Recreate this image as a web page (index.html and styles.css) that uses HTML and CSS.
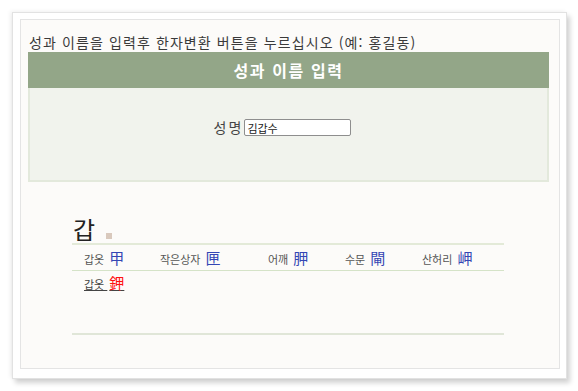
FILE: index.html
```html
<!DOCTYPE html>
<html lang="ko">
<head>
    <meta charset="UTF-8">
    <meta name="viewport" content="width=device-width, initial-scale=1.0">
    <title>한자변환</title>
    <link rel="stylesheet" href="styles.css">
</head>
<body>
    <div class="frame">
        <div class="sheet">
            <p class="guide">성과 이름을 입력후 한자변환 버튼을 누르십시오 (예: 홍길동)</p>

            <div class="name-box">
                <div class="name-head">성과 이름 입력</div>
                <div class="name-body">
                    <label class="name-label" for="id-name">성명</label>
                    <input class="name-input" id="id-name" type="text" value="김갑수">
                </div>
            </div>

            <!-- 변환 결과 -->
            <div class="result">
                <div class="result-title">갑 <span class="dot"></span></div>
                <div class="result-row">
                    <span class="item">갑옷 <b class="hanja">甲</b></span>
                    <span class="item">작은상자 <b class="hanja">匣</b></span>
                    <span class="item">어깨 <b class="hanja">胛</b></span>
                    <span class="item">수문 <b class="hanja">閘</b></span>
                    <span class="item">산허리 <b class="hanja">岬</b></span>
                </div>
                <div class="result-row last">
                    <a class="item picked" href="#">갑옷 <b class="hanja">鉀</b></a>
                </div>
            </div>
        </div>
    </div>
</body>
</html>
```

FILE: styles.css
```css
body {
    margin: 0;
    padding: 12px;
    background-color: #ffffff;
    font-family: "Noto Sans CJK KR", "Noto Sans", sans-serif;
    color: #333;
}

/* 바깥 액자 */
.frame {
    width: 540px;
    height: 353px;
    padding: 6px 6px 6px 7px;
    background-color: #ffffff;
    border: 1px solid #e2e2e2;
    box-shadow: 3px 4px 5px rgba(0, 0, 0, 0.18),
                -2px -1px 4px rgba(0, 0, 0, 0.06);
}
.sheet {
    height: 335px;
    padding: 13px 10px 0 8px;
    background-color: #fcfbf9;
    border: 1px solid #e4e4e4;
}

.guide {
    margin: 0;
    font-size: 14px;
    line-height: 19px;
    letter-spacing: 1.1px;
    color: #3a3a3a;
}

/* 입력 상자 */
.name-box {
    border: 2px solid #e3e9dc;
    border-top: none;
    margin-left: -1px;
}
.name-head {
    height: 36px;
    line-height: 36px;
    background-color: #93a688;
    color: #ffffff;
    font-size: 16px;
    font-weight: bold;
    letter-spacing: 1.6px;
    text-align: center;
    margin: 0 -2px;
}
.name-body {
    height: 92px;
    background-color: #f1f3ed;
    display: flex;
    justify-content: center;
    align-items: flex-start;
    padding: 31px 12px 0 0;
    box-sizing: border-box;
    gap: 1px;
}
.name-label {
    font-size: 14px;
    line-height: 17px;
    letter-spacing: 2px;
    color: #444;
}
.name-input {
    width: 107px;
    height: 17px;
    box-sizing: border-box;
    margin: 0;
    padding: 0 2px;
    border: 1px solid #8e8e8e;
    border-radius: 2px;
    font-family: "Noto Sans CJK KR", sans-serif;
    font-size: 11px;
    color: #222;
    background: #fff;
}

/* 결과 */
.result {
    margin: 34px 45px 0 43px;
}
.result-title {
    font-size: 24px;
    line-height: 26px;
    color: #222;
    padding-left: 1px;
    border-bottom: 2px solid #e3ead8;
    padding-bottom: 1px;
}
.dot {
    display: inline-block;
    width: 6px;
    height: 6px;
    background-color: #d9c9bd;
    margin-left: 4px;
}
.result-row {
    display: grid;
    grid-template-columns: 76px 108px 77px 77px auto;
    height: 25px;
    align-items: center;
    padding-left: 12px;
    border-bottom: 1px solid #d5e3c8;
}
.result-row.last {
    height: 64px;
    align-items: start;
    padding-top: 1px;
    box-sizing: border-box;
    border-bottom: 2px solid #e0e6d8;
}
.item {
    font-size: 11px;
    color: #555;
    white-space: nowrap;
}
.hanja {
    font-weight: normal;
    font-size: 15px;
    color: #3446b4;
    margin-left: 2px;
}
.picked {
    color: #444;
    text-decoration: underline;
}
.picked .hanja {
    color: #ff1010;
}
```
